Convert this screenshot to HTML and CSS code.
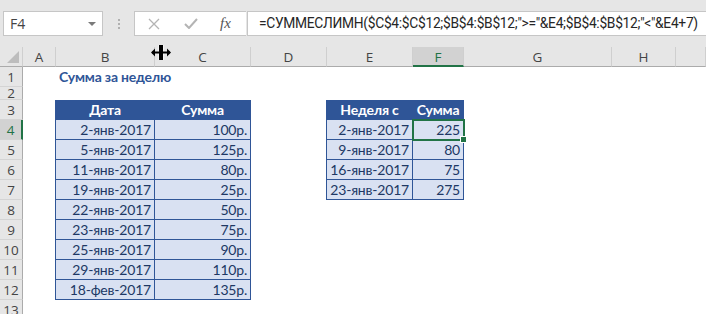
FILE: index.html
```html
<!DOCTYPE html>
<html>
<head>
  <meta charset="UTF-8">
  <title>Сумма за неделю</title>
  <link rel="stylesheet" href="styles.css">
</head>
<body>
  <div class="ribbon">
    <div class="namebox">F4<span class="caret"></span></div>
    <div class="grip"><i></i><i></i><i></i></div>
    <div class="fxbox">
      <svg class="btn" width="12" height="12" viewBox="0 0 12 12"><path d="M1 1L11 11M11 1L1 11" stroke="#b4b4b4" stroke-width="1.3" fill="none"/></svg>
      <svg class="btn" width="14" height="11" viewBox="0 0 14 11"><path d="M1 6L5 10L13 1" stroke="#b4b4b4" stroke-width="2" fill="none"/></svg>
      <span class="fx">fx</span>
    </div>
    <div class="formula">=СУММЕСЛИМН($C$4:$C$12;$B$4:$B$12;"&gt;="&amp;E4;$B$4:$B$12;"&lt;"&amp;E4+7)</div>
  </div>

  <div class="sheet">
    <div class="row colhdr">
      <div class="corner"></div>
      <div>A</div><div>B</div><div>C</div><div>D</div><div>E</div>
      <div class="sel">F</div><div>G</div><div>H</div><div></div>
    </div>
    <div class="row">
      <div class="rh">1</div><div></div>
      <div class="title">Сумма за неделю</div>
    </div>
    <div class="row short">
      <div class="rh">2</div>
    </div>
    <div class="row">
      <div class="rh">3</div><div></div>
      <div class="th first">Дата</div><div class="th">Сумма</div><div></div>
      <div class="th first">Неделя с</div><div class="th">Сумма</div>
    </div>
    <div class="row">
      <div class="rh sel">4</div><div></div>
      <div class="td first">2-янв-2017</div><div class="td">100р.</div><div></div>
      <div class="td first">2-янв-2017</div><div class="td active">225</div>
    </div>
    <div class="row">
      <div class="rh">5</div><div></div>
      <div class="td first">5-янв-2017</div><div class="td">125р.</div><div></div>
      <div class="td first">9-янв-2017</div><div class="td">80</div>
    </div>
    <div class="row">
      <div class="rh">6</div><div></div>
      <div class="td first">11-янв-2017</div><div class="td">80р.</div><div></div>
      <div class="td first">16-янв-2017</div><div class="td">75</div>
    </div>
    <div class="row">
      <div class="rh">7</div><div></div>
      <div class="td first">19-янв-2017</div><div class="td">25р.</div><div></div>
      <div class="td first">23-янв-2017</div><div class="td">275</div>
    </div>
    <div class="row">
      <div class="rh">8</div><div></div>
      <div class="td first">22-янв-2017</div><div class="td">50р.</div>
    </div>
    <div class="row">
      <div class="rh">9</div><div></div>
      <div class="td first">23-янв-2017</div><div class="td">75р.</div>
    </div>
    <div class="row">
      <div class="rh">10</div><div></div>
      <div class="td first">25-янв-2017</div><div class="td">90р.</div>
    </div>
    <div class="row">
      <div class="rh">11</div><div></div>
      <div class="td first">29-янв-2017</div><div class="td">110р.</div>
    </div>
    <div class="row">
      <div class="rh">12</div><div></div>
      <div class="td first">18-фев-2017</div><div class="td">135р.</div>
    </div>
    <div class="row">
      <div class="rh">13</div>
    </div>
  </div>

  <svg class="cursor" width="20" height="18" viewBox="0 0 20 18">
    <path d="M8.5 1V16M11.5 1V16" stroke="#fff" stroke-width="2"/>
    <rect x="8" y="1" width="4" height="15" fill="#000"/>
    <path d="M1 8.5H19" stroke="#000" stroke-width="2"/>
    <path d="M0 8.5L4 4.5V12.5Z M20 8.5L16 4.5V12.5Z" fill="#000"/>
  </svg>
</body>
</html>
```

FILE: styles.css
```css
body {
  margin: 0;
  background: #fff;
  font-family: "Lato", "Noto Sans", sans-serif;
  overflow: hidden;
  position: relative;
}

/* formula bar */
.ribbon {
  height: 47px;
  background: #e6e6e6;
  display: flex;
  align-items: flex-start;
  padding-top: 11px;
  box-sizing: border-box;
  font-family: "Open Sans", "Noto Sans", sans-serif;
  color: #262626;
}
.namebox {
  margin-left: 3px;
  width: 100px;
  height: 25px;
  box-sizing: border-box;
  background: #fff;
  border: 1px solid #c6c6c6;
  display: flex;
  align-items: center;
  justify-content: space-between;
  padding: 0 6px 0 6px;
  font-size: 14px;
  color: #444;
}
.caret {
  border-left: 4px solid transparent;
  border-right: 4px solid transparent;
  border-top: 4px solid #7a7a7a;
  margin-top: 1px;
}
.grip {
  width: 31px;
  height: 25px;
  display: flex;
  flex-direction: column;
  align-items: center;
  justify-content: center;
  gap: 2px;
}
.grip i {
  width: 2px;
  height: 2px;
  background: #b0b0b0;
}
.fxbox {
  width: 112px;
  height: 25px;
  box-sizing: border-box;
  background: #fff;
  border: 1px solid #c6c6c6;
  border-right: none;
  display: flex;
  align-items: center;
  padding-left: 13px;
  gap: 24px;
}
.fx {
  font-family: "Liberation Serif", serif;
  font-style: italic;
  font-size: 15px;
  color: #555;
  margin-left: -2px;
}
.formula {
  flex: 1;
  margin-left: 1px;
  height: 25px;
  box-sizing: border-box;
  background: #fff;
  border: 1px solid #c6c6c6;
  border-right: none;
  padding-left: 11px;
  font-family: "Roboto", "Open Sans", sans-serif;
  font-size: 13.8px;
  letter-spacing: -0.3px;
  line-height: 23px;
  white-space: nowrap;
  overflow: hidden;
}

/* grid */
.row {
  display: grid;
  grid-template-columns: 23px 33px 99px 96px 76px 86px 51px 148px 64px 1fr;
  height: 20px;
  font-size: 14px;
  letter-spacing: -0.2px;
}
.row.short { height: 13px; }
.row > div {
  box-sizing: border-box;
  white-space: nowrap;
  overflow: hidden;
}

.colhdr > div {
  background: #e6e6e6;
  border-right: 1px solid #cfcfcf;
  border-bottom: 1px solid #ababab;
  text-align: center;
  font-family: "Open Sans", "Noto Sans", sans-serif;
  font-size: 13.5px;
  letter-spacing: 0;
  line-height: 20px;
  color: #444;
}
.colhdr > div.sel {
  background: #d2d2d2;
  color: #217346;
  border-bottom: 2px solid #217346;
}
.corner { position: relative; }
.corner::after {
  content: "";
  position: absolute;
  right: 3px;
  bottom: 3px;
  border-left: 12px solid transparent;
  border-bottom: 12px solid #bdbdbd;
}

.rh {
  background: #e6e6e6;
  border-right: 1px solid #ababab;
  border-bottom: 1px solid #d4d4d4;
  text-align: center;
  font-family: "Open Sans", "Noto Sans", sans-serif;
  font-size: 13.5px;
  letter-spacing: 0;
  line-height: 20px;
  color: #444;
}
.short .rh { line-height: 13px; }
.rh.sel {
  background: #d2d2d2;
  color: #217346;
  border-right: 2px solid #217346;
}

.title {
  grid-column: span 2;
  padding-left: 3px;
  font-weight: bold;
  color: #2f5597;
  line-height: 20px;
}

.th, .td {
  border-right: 1px solid #2f5597;
  border-bottom: 1px solid #2f5597;
  line-height: 19px;
  padding: 0 3px;
}
.th {
  background: #2f5597;
  color: #fff;
  font-weight: bold;
  text-align: center;
}
.td {
  background: #d9e1f2;
  color: #203864;
  text-align: right;
}
.first { box-shadow: -1px 0 0 #2f5597; }

.td.active {
  position: relative;
  overflow: visible;
  outline: 2px solid #217346;
  outline-offset: -1px;
}
.td.active::after {
  content: "";
  position: absolute;
  right: -4px;
  bottom: -4px;
  width: 5px;
  height: 5px;
  background: #217346;
  border: 1px solid #fff;
}

.cursor {
  position: absolute;
  left: 151px;
  top: 44px;
}
```
